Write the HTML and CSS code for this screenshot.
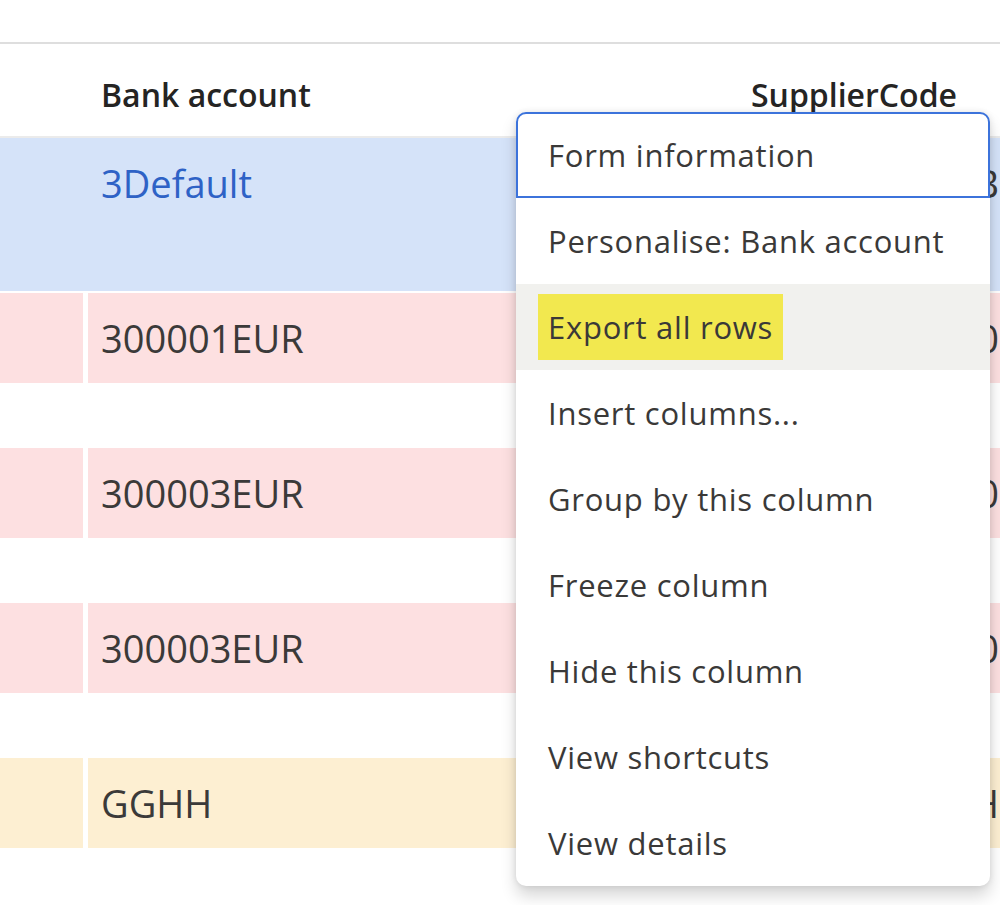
FILE: index.html
```html
<!DOCTYPE html>
<html lang="en">
<head>
  <meta charset="UTF-8">
  <meta name="viewport" content="width=device-width, initial-scale=1.0">
  <title>Supplier bank accounts</title>
  <link rel="stylesheet" href="styles.css">
</head>
<body>
  <div class="toolbar"></div>

  <div class="grid">
    <div class="row head">
      <div class="cell"></div>
      <div class="cell">Bank account</div>
      <div class="cell code">SupplierCode</div>
    </div>
    <div class="row selected">
      <div class="cell"></div>
      <div class="cell link">3Default</div>
      <div class="cell peek">B</div>
    </div>
    <div class="row pink">
      <div class="cell"></div>
      <div class="cell">300001EUR</div>
      <div class="cell peek">0</div>
    </div>
    <div class="row pink">
      <div class="cell"></div>
      <div class="cell">300003EUR</div>
      <div class="cell peek">0</div>
    </div>
    <div class="row pink">
      <div class="cell"></div>
      <div class="cell">300003EUR</div>
      <div class="cell peek">0</div>
    </div>
    <div class="row beige">
      <div class="cell"></div>
      <div class="cell">GGHH</div>
      <div class="cell peek">H</div>
    </div>
  </div>

  <!-- column header context menu -->
  <ul class="menu">
    <li class="focused">Form information</li>
    <li>Personalise: Bank account</li>
    <li class="hover"><span class="mark">Export all rows</span></li>
    <li>Insert columns...</li>
    <li>Group by this column</li>
    <li>Freeze column</li>
    <li>Hide this column</li>
    <li>View shortcuts</li>
    <li>View details</li>
  </ul>
</body>
</html>
```

FILE: styles.css
```css
body {
  margin: 0;
  font-family: "Open Sans", Arial, sans-serif;
  background: #fff;
  overflow: hidden;
  position: relative;
  height: 905px;
}
.toolbar {
  height: 42px;
  border-bottom: 2px solid #dedede;
}
.row {
  display: grid;
  grid-template-columns: 83px 560px 1fr;
  column-gap: 5px;
  height: 155px;
  align-items: start;
}
.cell {
  height: 90px;
  display: flex;
  align-items: center;
  padding-left: 13px;
  font-size: 38px;
  color: #3b3a39;
  white-space: nowrap;
  overflow: hidden;
}
.row.head {
  height: 92px;
  align-items: center;
  border-bottom: 2px solid #ebebeb;
}
.row.head .cell {
  height: auto;
  padding-top: 8px;
  font-size: 32px;
  font-weight: 600;
  color: #252423;
}
.row.head .code {
  justify-content: flex-end;
  padding-right: 43px;
}
.cell.peek {
  justify-content: flex-end;
  padding-right: 1px;
}
.row.selected {
  height: 153px;
  margin-bottom: 2px;
  background: #d5e3f9;
}
.cell.link {
  color: #2e62c6;
}
.row.pink .cell {
  background: #fde0e1;
}
.row.beige .cell {
  background: #fdefd2;
}

.menu {
  position: absolute;
  left: 516px;
  top: 112px;
  width: 474px;
  margin: 0;
  padding: 0;
  list-style: none;
  background: #fff;
  border-radius: 10px;
  box-shadow: 0 10px 16px rgba(0, 0, 0, 0.16), 0 0 6px rgba(0, 0, 0, 0.1);
}
.menu li {
  height: 86px;
  box-sizing: border-box;
  display: flex;
  align-items: center;
  padding-left: 32px;
  font-size: 31px;
  letter-spacing: 0.75px;
  color: #3a3938;
  white-space: nowrap;
}
.menu li.focused {
  border: 2px solid #3c73db;
  border-radius: 10px 10px 0 0;
  padding-left: 30px;
}
.menu li.hover {
  background: #f1f1ee;
}
.mark {
  background: #f2e84f;
  padding: 12px 10px;
  margin-left: -10px;
}
```
